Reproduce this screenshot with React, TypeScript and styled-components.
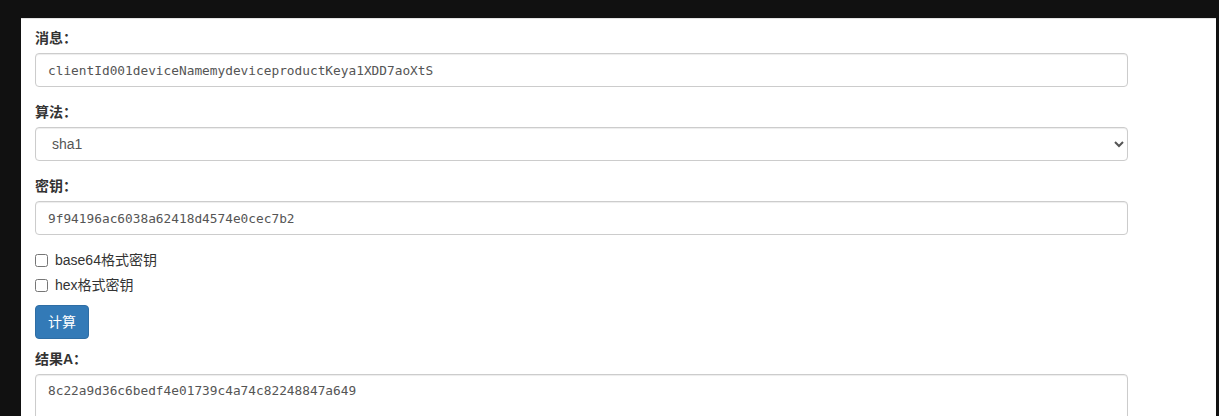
import React, { useState } from 'react';
import styled, { createGlobalStyle } from 'styled-components';

const GlobalStyle = createGlobalStyle`
  html, body {
    margin: 0;
    padding: 0;
    background: #111111;
  }
  body {
    font-family: "Liberation Sans", Arial, "Noto Sans CJK SC", sans-serif;
    font-size: 14px;
    line-height: 1.42857143;
    color: #333;
  }
  * {
    box-sizing: border-box;
  }
`;

const Panel = styled.div`
  margin: 18px 3px 0 21px;
  background: #fff;
  border-top: 1px solid #e3e3e3;
  padding: 9px 88px 40px 14px;
  min-height: 420px;
`;

const FormGroup = styled.div`
  margin-bottom: 15px;
`;

const Label = styled.label`
  display: inline-block;
  margin-bottom: 5px;
  font-weight: 700;
  color: #333;
`;

const fieldBase = `
  display: block;
  width: 100%;
  height: 34px;
  padding: 6px 12px;
  color: #555;
  background: #fff;
  border: 1px solid #ccc;
  border-radius: 4px;
  box-shadow: inset 0 1px 1px rgba(0, 0, 0, 0.075);
  outline: none;
`;

const Input = styled.input`
  ${fieldBase}
  font-family: "DejaVu Sans Mono", "Liberation Mono", monospace;
  font-size: 12.8px;
  line-height: 20px;
`;

const Select = styled.select`
  ${fieldBase}
  font-family: "Liberation Sans", Arial, sans-serif;
  font-size: 14px;
`;

const TextArea = styled.textarea`
  ${fieldBase}
  height: 100px;
  resize: vertical;
  font-family: "DejaVu Sans Mono", "Liberation Mono", monospace;
  font-size: 12.8px;
  line-height: 20px;
`;

const CheckRow = styled.div<{ $first?: boolean }>`
  position: relative;
  display: block;
  margin-top: ${(p) => (p.$first ? '0' : '-5px')};
  margin-bottom: 10px;
  & label {
    display: flex;
    align-items: center;
    min-height: 20px;
    cursor: pointer;
    color: #333;
  }
  & input {
    width: 13px;
    height: 13px;
    margin: 0 7px 0 0;
  }
`;

const Button = styled.button`
  display: block;
  height: 34px;
  padding: 6px 12px;
  font-size: 14px;
  line-height: 20px;
  font-family: "Liberation Sans", Arial, "Noto Sans CJK SC", sans-serif;
  color: #fff;
  background-color: #337ab7;
  border: 1px solid #2e6da4;
  border-radius: 4px;
  margin-bottom: 10px;
  cursor: pointer;
`;

export default function App() {
  const [message, setMessage] = useState('clientId001deviceNamemydeviceproductKeya1XDD7aoXtS');
  const [algo, setAlgo] = useState('sha1');
  const [secret, setSecret] = useState('9f94196ac6038a62418d4574e0cec7b2');
  const [b64, setB64] = useState(false);
  const [hex, setHex] = useState(false);
  const [result] = useState('8c22a9d36c6bedf4e01739c4a74c82248847a649');

  return (
    <>
      <GlobalStyle />
      <Panel>
        <FormGroup>
          <Label>消息：</Label>
          <Input value={message} onChange={(e) => setMessage(e.target.value)} />
        </FormGroup>
        <FormGroup>
          <Label>算法：</Label>
          <Select value={algo} onChange={(e) => setAlgo(e.target.value)}>
            <option value="md5">md5</option>
            <option value="sha1">sha1</option>
            <option value="sha256">sha256</option>
          </Select>
        </FormGroup>
        <FormGroup>
          <Label>密钥：</Label>
          <Input value={secret} onChange={(e) => setSecret(e.target.value)} />
        </FormGroup>
        <CheckRow $first>
          <label>
            <input type="checkbox" checked={b64} onChange={() => setB64(!b64)} />
            base64格式密钥
          </label>
        </CheckRow>
        <CheckRow>
          <label>
            <input type="checkbox" checked={hex} onChange={() => setHex(!hex)} />
            hex格式密钥
          </label>
        </CheckRow>
        <Button>计算</Button>
        <FormGroup>
          <Label>结果A：</Label>
          <TextArea value={result} readOnly />
        </FormGroup>
      </Panel>
    </>
  );
}
